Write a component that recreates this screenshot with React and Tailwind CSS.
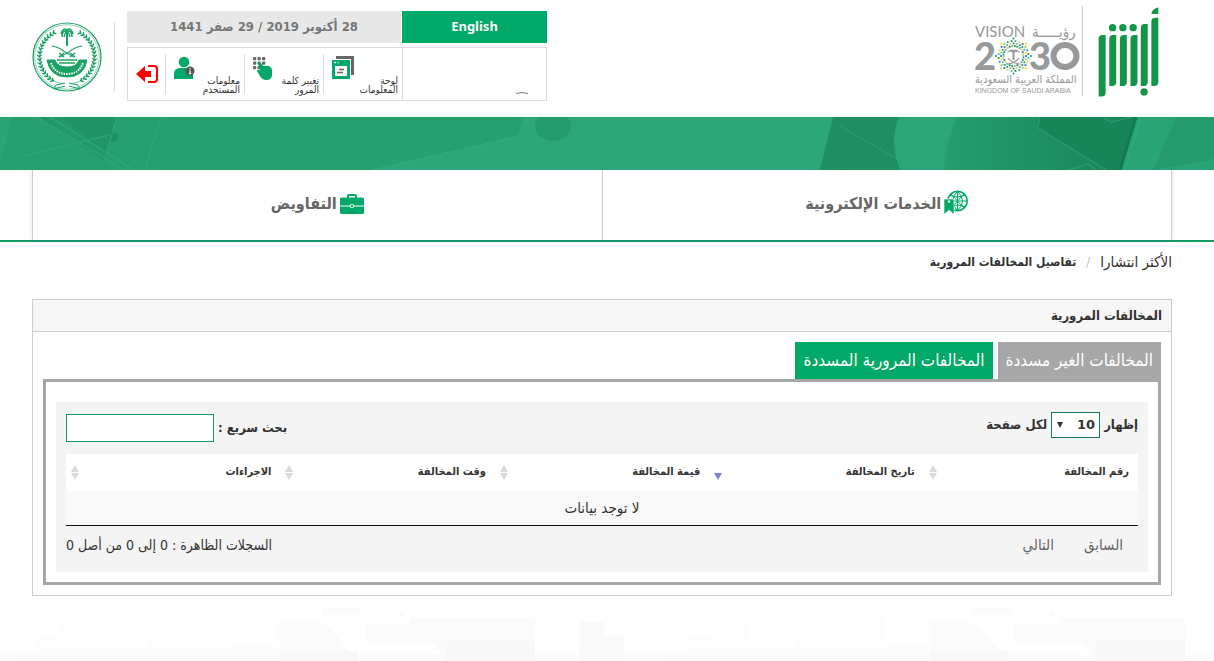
import { useState } from 'react';
import clsx from 'clsx';

const COLUMNS = [
  { key: 'number', label: 'رقم المخالفة', sort: 'both' },
  { key: 'date', label: 'تاريخ المخالفة', sort: 'desc' },
  { key: 'amount', label: 'قيمة المخالفة', sort: 'both' },
  { key: 'time', label: 'وقت المخالفة', sort: 'both' },
  { key: 'actions', label: 'الاجراءات', sort: 'both' },
];

const TABS = [
  { id: 'unpaid', label: 'المخالفات الغير مسددة' },
  { id: 'paid', label: 'المخالفات المرورية المسددة' },
];

// ---- Logos ----
function AbsherLogo() {
  return (
    <svg viewBox="0 0 190 275" className="h-[92px] w-[63px]" fill="#149447" role="img" aria-label="أبشر">
      <path d="M5 98q0-12 12-12h9v174q0 12-12 12H5z" />
      <path d="M37 98q0-12 12-12h9v142q0 12-12 12h-9z" />
      <path d="M69 98q0-12 12-12h9v142q0 12-12 12h-9z" />
      <path d="M101 98q0-12 12-12h9v142q0 12-12 12h-9z" />
      <path d="M132 65q0-12 12-12h9v175q0 12-12 12h-9z" />
      <path d="M164 46q0-12 12-12h9v194q0 12-12 12h-9z" />
      <path d="M164 23q2-17 21-20v20z" />
      <circle cx="47" cy="64" r="11" />
      <circle cx="78" cy="64" r="11" />
      <circle cx="109" cy="64" r="11" />
      <circle cx="142" cy="258" r="11" />
    </svg>
  );
}

const DOT_COLORS = ['#1a9b8e', '#8dc63f', '#2f6fa8', '#f0cf3c', '#35b6d6', '#2c8a4b'];

function VisionLogo() {
  const dots = [];
  [10, 12.5, 15, 17.5].forEach((r, ring) => {
    const n = 24;
    for (let i = 0; i < n; i++) {
      // outermost ring only keeps the eight tips of the star
      if (ring === 3 && i % 3 !== 0) continue;
      const a = ((i + (ring % 2 ? 0 : 0.5)) / n) * Math.PI * 2;
      dots.push({ x: 38.5 + Math.cos(a) * r, y: 34 + Math.sin(a) * r, c: DOT_COLORS[(i * 5 + ring * 2) % 6] });
    }
  });
  return (
    <svg viewBox="0 0 106 80" className="h-20 w-[106px]" fill="#97999b" direction="ltr" role="img" aria-label="رؤية 2030">
      <text x="0" y="15" fontFamily="Lato, sans-serif" fontSize="15">VISION</text>
      <text x="57" y="15" fontFamily="'DejaVu Sans Condensed', 'DejaVu Sans', sans-serif" fontSize="15">رؤيـــــة</text>
      <text x="-1" y="48" fontFamily="Lato, sans-serif" fontSize="38" fontWeight="900">2</text>
      <text x="54" y="48" fontFamily="Lato, sans-serif" fontSize="38" fontWeight="900">3</text>
      <ellipse cx="90" cy="34" rx="11.5" ry="11" fill="none" stroke="#97999b" strokeWidth="6" />
      {dots.map((d, i) => (
        <rect key={i} x={d.x - 0.9} y={d.y - 0.9} width="1.800" height="1.800" fill={d.c} />
      ))}
      <path d="M37.500 30h2v8h-2z" />
      <path d="M32 31q3-5 6.500-3 3.500-2 6.500 3-3-2-5-1l-1.500 2-1.500-2q-2-1-5 1z" />
      <path d="M33 36q4 5 11 6M44 36q-4 5-11 6" fill="none" stroke="#97999b" strokeWidth="1.200" />
      <text x="0" y="61" fontFamily="'DejaVu Sans Condensed', 'DejaVu Sans', sans-serif" fontSize="11">المملكة العربية السعودية</text>
      <text x="0" y="71" fontFamily="'Liberation Sans', sans-serif" fontSize="7">KINGDOM OF SAUDI ARABIA</text>
    </svg>
  );
}

function MinistryEmblem() {
  const leaves = [];
  for (let i = 0; i < 17; i++) {
    const deg = 118 + i * 7.5;
    leaves.push(deg);
  }
  return (
    <svg viewBox="-35 -35 70 70" className="size-[70px]" fill="none" stroke="#1ba264" role="img" aria-label="وزارة الداخلية">
      <circle r="34" strokeWidth="1.200" />
      <circle r="32.300" strokeWidth="0.500" />
      {[1, -1].map((side) => (
        <g key={side} transform={`scale(${side} 1)`}>
          <path d="M-4 27A27.500 27.500 0 0 1 -18 -21" strokeWidth="0.600" />
          {leaves.map((deg) => (
            <g key={deg} transform={`rotate(${deg}) translate(27.5 0)`} fill="#1ba264" stroke="none">
              <ellipse cx="1.800" cy="1" rx="2.300" ry="0.800" transform="rotate(40)" />
              <ellipse cx="-1.800" cy="1" rx="2.300" ry="0.800" transform="rotate(-40)" />
            </g>
          ))}
          <path d="M15 -11Q8 -10 2 -5L-7 0" strokeWidth="1.100" />
          <path d="M-8 -4l5 4M-3 -4l-5 4" strokeWidth="1.400" />
          <path d="M0 -27Q-4 -30 -6 -23M0 -26Q-5 -27 -5 -20M0 -26Q-2 -24 -3 -20" strokeWidth="1.500" />
          <path d="M-2 29l-11 3 2-4 9-2" strokeWidth="1" />
        </g>
      ))}
      <path d="M0 -27V-11" strokeWidth="2" />
      <path d="M-20 3h8q2 7 12 7t12-7h8q-3 17-20 17T-20 3z" fill="#1ba264" strokeWidth="1" />
      <path d="M-16 6q4 11 16 11T16 6" stroke="#fff" strokeWidth="2" strokeDasharray="1.500 1" />
      <path d="M-10 3h20M-8 6h16" strokeWidth="1.600" />
    </svg>
  );
}

// ---- Toolbar icons ----
function DashboardIcon() {
  return (
    <svg viewBox="0 0 22 23" className="h-[23px] w-[22px]">
      <path d="M4 0h18v19h-3V3H4z" fill="#666" />
      <path d="M0 4h18v19H0z" fill="#00a967" />
      <path d="M3 10h12v10H3z" fill="#fff" />
      <path d="M2 6.500h2M5.500 6.500h1" stroke="#fff" strokeWidth="1.300" />
      <path d="M7 13.500h5M5 16.500h6" stroke="#666" strokeWidth="1.300" />
    </svg>
  );
}

function KeypadIcon() {
  return (
    <svg viewBox="0 0 20 24" className="h-6 w-5">
      <g fill="#666">
        {[0, 4.5, 9].map((y) => [0, 4.5, 9].map((x) => <rect key={`${x}-${y}`} x={x} y={y + 1} width="3.300" height="3.300" rx="1" />))}
      </g>
      <path d="M5 7q1.500-2 3 0l3 4q1-2 3-1 2-.6 3 1 2 .5 2 4v4q0 5-6 5-4 0-6-4l-3-5q0-2 3-.5z" fill="#00a967" />
    </svg>
  );
}

function UserInfoIcon() {
  return (
    <svg viewBox="0 0 21 24" className="h-6 w-[21px]">
      <circle cx="10" cy="6" r="5.300" fill="#00a967" />
      <path d="M0 18q0-6 6-6h8q5 0 5 6v5H0z" fill="#00a967" />
      <circle cx="16" cy="15" r="4.500" fill="#555" />
      <path d="M16 12v1.300M16 14.200v3.500M15 17.700h2.200" stroke="#fff" strokeWidth="1.200" />
    </svg>
  );
}

function LogoutIcon() {
  return (
    <svg viewBox="0 0 22 20" className="h-5 w-[22px]">
      <path d="M0 10L9 2v5h6v6H9v5z" fill="#f00" />
      <path d="M12 2h6q3 0 3 3v10q0 3-3 3h-6" fill="none" stroke="#f00" strokeWidth="2" />
    </svg>
  );
}

function BriefcaseIcon() {
  return (
    <svg viewBox="0 0 24 20" className="h-5 w-6">
      <path d="M8 4V2q0-1 1-1h6q1 0 1 1v2" fill="none" stroke="#00a967" strokeWidth="2" />
      <rect y="3.500" width="24" height="16.500" rx="1.500" fill="#00a967" />
      <path d="M0 12h24" stroke="#fff" strokeWidth="1" />
      <circle cx="12" cy="12" r="1.800" fill="#00a967" stroke="#fff" strokeWidth="0.900" />
    </svg>
  );
}

function GlobeIcon() {
  return (
    <svg viewBox="0 0 24 25" className="mb-1 h-[25px] w-6" fill="none" stroke="#00a967">
      <circle cx="13.500" cy="11" r="9.700" strokeWidth="1.600" />
      <path d="M13.500 1.300v19.400M4 11h19M6 5q7.500 4 15 0M6 17q7.500-4 15 0" strokeWidth="1.100" />
      <path d="M13.500 1.300q-10 9.700 0 19.400M13.500 1.300q10 9.700 0 19.400M7 4l13 14M20 4L8 17" />
      <path d="M0 9h10v15.500l-5-4.500-5 4.500z" fill="#00a967" stroke="#fff" strokeWidth="0.600" />
      <circle cx="5" cy="11.500" r="1.200" fill="#fff" stroke="none" />
    </svg>
  );
}

function SortIcon({ dir }) {
  return (
    <svg viewBox="0 0 8 15" className="h-[15px] w-2 shrink-0" aria-hidden="true">
      {dir === 'both' && <path d="M4 0l4 7H0z" fill="#d9d9d9" />}
      <path d="M0 8h8l-4 7z" fill={dir === 'both' ? '#d9d9d9' : '#807fd3'} />
    </svg>
  );
}

// ---- Page sections ----
function ToolLink({ icon, children }) {
  return (
    <a href="#" className="flex w-[79px] items-start justify-between border-l border-[#ddd] pr-1 pl-2 text-right text-[10px] leading-[9px] text-[#333]">
      <span className="w-11 pt-[22px]">{children}</span>
      <span className="shrink-0 pt-[2px]">{icon}</span>
    </a>
  );
}

function Header() {
  return (
    <header className="flex items-start justify-between pr-[54px] pl-8">
      <div className="flex items-start pt-[6px]">
        <AbsherLogo />
        <div className="mr-[14px] h-[90px] w-px bg-[#ccc]" />
        <div className="mr-px pt-4">
          <VisionLogo />
        </div>
      </div>

      <div className="flex items-start">
        <div className="w-[420px] pt-[11px]">
          <div className="flex h-8 gap-px">
            <a href="#" lang="en" className="flex w-[145px] items-center justify-center bg-[#00a967] font-['Noto_Sans',sans-serif] text-[13px] font-bold text-white">
              English
            </a>
            <div className="flex flex-1 items-center justify-center bg-[#e8e8e8] text-[13px] font-bold text-[#777]">
              28 أكتوبر 2019 / 29 صفر 1441
            </div>
          </div>
          <div className="mt-1 flex h-[54px] border border-[#ddd]">
            <div className="flex w-36 items-end border-l border-[#ddd] pr-[18px] pb-[6px]">
              <svg viewBox="0 0 12 2" className="h-[2px] w-3">
                <path d="M0 1.500Q6-.5 12 1.500" fill="none" stroke="#8b7068" />
              </svg>
            </div>
            <nav className="flex flex-1 py-[6px]">
              <ToolLink icon={<DashboardIcon />}>لوحة المعلومات</ToolLink>
              <ToolLink icon={<KeypadIcon />}>تغيير كلمة المرور</ToolLink>
              <ToolLink icon={<UserInfoIcon />}>معلومات المستخدم</ToolLink>
              <a href="#" aria-label="تسجيل الخروج" className="flex flex-1 items-center justify-center">
                <LogoutIcon />
              </a>
            </nav>
          </div>
        </div>
        <div className="mt-[22px] mr-3 ml-3 h-[70px] w-px bg-[#ddd]" />
        <div className="pt-[22px]">
          <MinistryEmblem />
        </div>
      </div>
    </header>
  );
}

function Banner() {
  return (
    <svg viewBox="0 0 1214 53" preserveAspectRatio="none" className="mt-[15px] block h-[53px] w-full" aria-hidden="true">
      <defs>
        <linearGradient id="shade" x1="0" x2="1">
          <stop offset="0" stopColor="#259d6c" />
          <stop offset="1" stopColor="#188456" />
        </linearGradient>
      </defs>
      <path d="M0 0h1214v53H0z" fill="#26a06e" />
      <path d="M0 0h10L0 43z" fill="#2aa575" />
      <path d="M37 0h80L106 38l-3 5z" fill="#219466" />
      <path d="M44 0h18l45 38-4 5z" fill="#239868" />
      <circle cx="113" cy="20" r="5" fill="#1e8f61" />
      <path d="M10 0L0 43M37 0l87 53M50 0l84 53M161 0l-16 53M117 0l-12 40M20 40l90-22" fill="none" stroke="#2fab7b" strokeWidth="1.500" opacity="0.700" />
      <path d="M372 53l147-34 6-19h308l-13 53z" fill="#2ca878" />
      <path d="M372 53l147-34 6-19" fill="none" stroke="#32ad7d" />
      <ellipse cx="553" cy="9" rx="18" ry="15" fill="#249b6c" />
      <path d="M833 0h66q-10 25 1 53h-80z" fill="#1f8f62" />
      <path d="M838 8l58 33" stroke="#2aa073" />
      <path d="M899 0h58q-10 25-13 53h-44q-11-28-1-53z" fill="#2ba676" />
      <path d="M957 0h180l-17 53H944q3-28 13-53z" fill="url(#shade)" />
      <path d="M1040 0h97l-17 53h-14L1038 11z" fill="#188557" />
      <path d="M1040 0l-2 11 68 42M1068 53l20-6 8 6M1103 0l8 5 20-5" fill="none" stroke="#2c9c70" strokeWidth="1.200" />
      <path d="M1137 0h77v53h-94z" fill="#29a474" />
      <path d="M1176 0h38v42l-60 11z" fill="#259b6c" />
      <path d="M1136 0l-16 53" stroke="#127a4e" strokeWidth="3" />
      <path d="M1141 0l-16 53" stroke="#34ad80" />
    </svg>
  );
}

function MainNav() {
  const item = 'flex h-[70px] flex-1 items-center justify-center gap-[3px] border-l border-[#ccc] pb-[2px] text-base font-bold text-[#666]';
  return (
    <nav className="border-b-2 border-[#149b66] pr-[42px] pl-8">
      <div className="flex border-r border-[#ccc] shadow-[0_0_4px_rgba(0,0,0,0.12)]">
        <a href="#" className={item}>
          <GlobeIcon />
          الخدمات الإلكترونية
        </a>
        <a href="#" className={item}>
          <BriefcaseIcon />
          التفاويض
        </a>
      </div>
    </nav>
  );
}

function ViolationsTable() {
  return (
    <table className="w-full table-fixed border-b border-[#111] text-[#333]">
      <thead>
        <tr className="h-[37px] bg-white">
          {COLUMNS.map(({ key, label, sort }) => (
            <th key={key} className="pr-[9px] pl-[5px] text-right text-[11px] font-bold">
              <button type="button" className="flex w-full items-center justify-between">
                {label}
                <SortIcon dir={sort} />
              </button>
            </th>
          ))}
        </tr>
      </thead>
      <tbody>
        <tr className="h-[34px] bg-[#f9f9f9]">
          <td colSpan={COLUMNS.length} className="text-center text-[15px]">لا توجد بيانات</td>
        </tr>
      </tbody>
    </table>
  );
}

function Violations() {
  const [tab, setTab] = useState('unpaid');
  const [pageSize, setPageSize] = useState('10');
  const [query, setQuery] = useState('');

  return (
    <section className="border border-[#ccc]">
      <h1 className="flex h-8 items-center border-b border-[#ccc] bg-[#f6f6f6] px-[9px] text-[13px] font-bold text-[#333]">
        المخالفات المرورية
      </h1>
      <div className="p-[10px]">
        <div className="flex gap-[5px]" role="tablist">
          {TABS.map(({ id, label }) => (
            <button
              key={id}
              type="button"
              role="tab"
              aria-selected={tab === id}
              onClick={() => setTab(id)}
              className={clsx('h-[37px] px-2 text-[17px] text-white', tab === id ? 'bg-[#a7a7a7]' : 'bg-[#00a967]')}
            >
              {label}
            </button>
          ))}
        </div>

        <div className="border-[3px] border-[#a7a7a7] px-[10px] pt-5 pb-[10px]">
          <div className="bg-[#f4f4f4] px-[10px] pt-[10px] pb-[17px]">
            <div className="mb-3 flex items-start justify-between text-[13px] font-bold text-[#333]">
              <label className="flex items-center gap-1">
                إظهار
                <span className="relative">
                  <select
                    value={pageSize}
                    onChange={(e) => setPageSize(e.target.value)}
                    className="block h-[26px] w-[49px] appearance-none border border-[#1d7a56] bg-white pr-1 font-['DejaVu_Sans',sans-serif] text-[13px] font-bold"
                  >
                    <option>10</option>
                    <option>25</option>
                    <option>50</option>
                  </select>
                  <svg viewBox="0 0 6 6" className="pointer-events-none absolute top-[10px] left-[6px] size-[6px]">
                    <path d="M0 0h6L3 6z" fill="#333" />
                  </svg>
                </span>
                لكل صفحة
              </label>
              <label className="flex items-center gap-1 pt-[2px]">
                بحث سريع :
                <input
                  type="search"
                  value={query}
                  onChange={(e) => setQuery(e.target.value)}
                  className="h-7 w-[148px] border border-[#149b66] bg-white px-1"
                />
              </label>
            </div>

            <ViolationsTable />

            <div className="flex items-start justify-between pt-[9px] text-sm text-[#333]">
              <div className="flex gap-[30px] pr-[15px] text-[15px] leading-5 text-[#666]">
                <button type="button">السابق</button>
                <button type="button">التالي</button>
              </div>
              <p>السجلات الظاهرة : 0 إلى 0 من أصل 0</p>
            </div>
          </div>
        </div>
      </div>
    </section>
  );
}

// faint skyline that closes the page
function Skyline() {
  return (
    <svg viewBox="0 0 1214 54" preserveAspectRatio="none" className="mt-3 block h-[53px] w-full" aria-hidden="true">
      {[0, 650].map((x) => (
        <g key={x} transform={`translate(${x} 0)`}>
          <path d="M15 54V42h22V28h24V14h35v26h51V30h4V0h40v10h42v26h44V14h45l36 40z" fill="#fdfdfd" />
          <path d="M280 16h46l32 38h-78zM323 0h38v7h-38zM399 3h6v6h-6z" fill="#fbfbfb" />
          <path d="M365 16h45v-6h125v44h-88l-16-20h-66z" fill="#fbfbfb" />
          <path d="M280 44h78v10h-78zM447 34h88v20h-88z" fill="#f8f8f8" />
        </g>
      ))}
      <path d="M535 10h45v42h-45z" fill="#fff" />
      <path d="M580 14h24v14h20v26h-45z" fill="#fafafa" />
      <path d="M0 48h1214v6H0z" fill="#f8f8f8" opacity="0.600" />
    </svg>
  );
}

export default function App() {
  return (
    <div dir="rtl" lang="ar" className="bg-white font-['DejaVu_Sans_Condensed','DejaVu_Sans',sans-serif]">
      <Header />
      <Banner />
      <MainNav />
      <main className="pr-[42px] pl-8">
        <nav aria-label="breadcrumb" className="flex gap-[10px] pt-[10px] pb-[27px] text-[13px] leading-5 text-[#333]">
          <a href="#" className="text-[15px] leading-5">الأكثر انتشارا</a>
          <span className="text-[#bbb]">/</span>
          <span className="text-xs leading-5 font-bold">تفاصيل المخالفات المرورية</span>
        </nav>
        <Violations />
      </main>
      <Skyline />
    </div>
  );
}
